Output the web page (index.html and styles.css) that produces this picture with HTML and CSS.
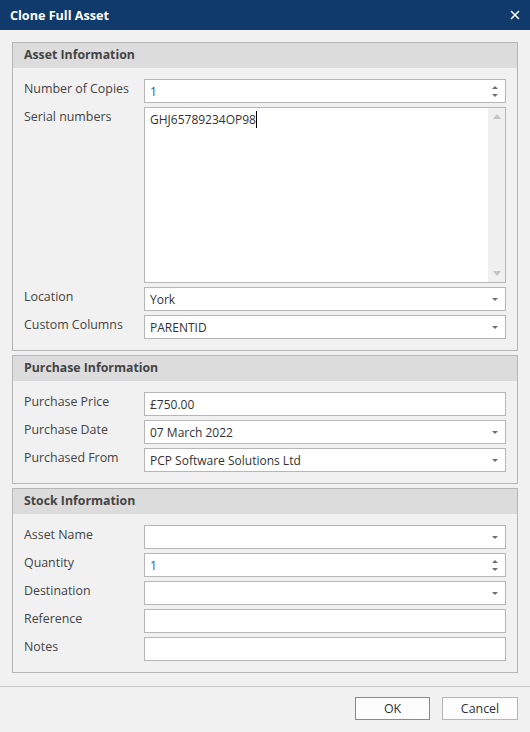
FILE: index.html
```html
<!DOCTYPE html>
<html lang="en">

<head>
  <meta charset="UTF-8">
  <meta name="viewport" content="width=device-width, initial-scale=1.0">
  <title>Clone Full Asset</title>
  <link rel="stylesheet" href="styles.css">
</head>

<body>
  <div class="dialog">
    <div class="titlebar">
      <span class="title">Clone Full Asset</span>
      <button class="close" title="Close">
        <svg width="10" height="10" viewBox="0 0 10 10">
          <path d="M1 1 L9 9 M9 1 L1 9" stroke="#fff" stroke-width="1.6" />
        </svg>
      </button>
    </div>

    <div class="content">
      <!-- Asset -->
      <section class="group">
        <div class="group-header">Asset Information</div>
        <div class="group-body">
          <label>Number of Copies</label>
          <div class="field spin"><span class="value num">1</span><span class="spinner"><i class="up"></i><i class="down"></i></span></div>

          <label>Serial numbers</label>
          <div class="field memo">
            <span class="value">GHJ65789234OP98<span class="caret"></span></span>
            <span class="scrollbar"><i class="up"></i><i class="down"></i></span>
          </div>

          <label>Location</label>
          <div class="field combo"><span class="value">York</span><i class="arrow"></i></div>

          <label>Custom Columns</label>
          <div class="field combo"><span class="value">PARENTID</span><i class="arrow"></i></div>
        </div>
      </section>

      <!-- Purchase -->
      <section class="group">
        <div class="group-header">Purchase Information</div>
        <div class="group-body">
          <label>Purchase Price</label>
          <div class="field"><span class="value">£750.00</span></div>

          <label>Purchase Date</label>
          <div class="field combo"><span class="value">07 March 2022</span><i class="arrow"></i></div>

          <label>Purchased From</label>
          <div class="field combo"><span class="value">PCP Software Solutions Ltd</span><i class="arrow"></i></div>
        </div>
      </section>

      <!-- Stock -->
      <section class="group">
        <div class="group-header">Stock Information</div>
        <div class="group-body">
          <label>Asset Name</label>
          <div class="field combo"><span class="value"></span><i class="arrow"></i></div>

          <label>Quantity</label>
          <div class="field spin"><span class="value num">1</span><span class="spinner"><i class="up"></i><i class="down"></i></span></div>

          <label>Destination</label>
          <div class="field combo"><span class="value"></span><i class="arrow"></i></div>

          <label>Reference</label>
          <div class="field"><span class="value"></span></div>

          <label>Notes</label>
          <div class="field"><span class="value"></span></div>
        </div>
      </section>
    </div>

    <div class="footer">
      <button class="btn default">OK</button>
      <button class="btn cancel">Cancel</button>
    </div>
  </div>
</body>

</html>
```

FILE: styles.css
```css
body {
  margin: 0;
  font-family: "Open Sans", "Noto Sans", Arial, sans-serif;
  font-size: 12px;
  color: #333;
  background-color: #f1f1f1;
}

.dialog {
  width: 530px;
  height: 732px;
  display: flex;
  flex-direction: column;
}

.titlebar {
  height: 30px;
  background-color: #0f3a6b;
  display: flex;
  align-items: center;
  justify-content: space-between;
  padding: 0 10px;
}

.title {
  color: #fff;
  font-weight: bold;
  font-size: 12.6px;
}

.close {
  background: none;
  border: none;
  padding: 0;
  width: 10px;
  height: 10px;
  display: flex;
  cursor: pointer;
}

.content {
  padding: 12px 12px 0;
  display: flex;
  flex-direction: column;
  gap: 4px;
}

.group {
  border: 1px solid #b6b6b6;
}

.group-header {
  height: 25px;
  box-sizing: border-box;
  line-height: 24px;
  background-color: #dcdcdc;
  padding-left: 11px;
  font-weight: bold;
  font-size: 12.3px;
  color: #444;
}

.group-body {
  display: grid;
  grid-template-columns: 120px 1fr;
  row-gap: 4px;
  padding: 11px;
}

.group-body label {
  line-height: 18px;
  padding-top: 1px;
  font-size: 12.4px;
  color: #444;
}

.field {
  position: relative;
  height: 24px;
  box-sizing: border-box;
  border: 1px solid #b6b6b6;
  background-color: #fff;
  display: flex;
  align-items: center;
  padding: 1px 5px 0;
}

.value {
  flex: 1;
  color: #333;
}

.value.num {
  color: #2a5ba8;
}

/* dropdown arrow */
.arrow {
  width: 0;
  height: 0;
  border-left: 3px solid transparent;
  border-right: 3px solid transparent;
  border-top: 3px solid #707070;
  margin-right: 2px;
}

.spinner {
  display: flex;
  flex-direction: column;
  gap: 5px;
  margin-right: 2px;
}

.spinner i {
  width: 0;
  height: 0;
  border-left: 3px solid transparent;
  border-right: 3px solid transparent;
}

.spinner .up {
  border-bottom: 3px solid #707070;
}

.spinner .down {
  border-top: 3px solid #707070;
}

.field.memo {
  height: 176px;
  align-items: flex-start;
  padding: 0 0 0 5px;
}

.memo .value {
  padding-top: 3px;
  line-height: 18px;
}

.caret {
  display: inline-block;
  width: 1px;
  height: 17px;
  background-color: #000;
  vertical-align: -4px;
}

.scrollbar {
  width: 17px;
  align-self: stretch;
  background-color: #f0f0f0;
  display: flex;
  flex-direction: column;
  justify-content: space-between;
  align-items: center;
  padding: 6px 0;
}

.scrollbar i {
  width: 0;
  height: 0;
  border-left: 4px solid transparent;
  border-right: 4px solid transparent;
}

.scrollbar .up {
  border-bottom: 5px solid #c4c4c4;
}

.scrollbar .down {
  border-top: 5px solid #c4c4c4;
}

.footer {
  margin-top: 13px;
  border-top: 1px solid #c8c8c8;
  padding: 10px 12px 0 0;
  display: flex;
  justify-content: flex-end;
  gap: 12px;
}

.btn {
  width: 75px;
  height: 23px;
  background-color: #fdfdfd;
  border: 1px solid #b6b6b6;
  font-family: inherit;
  font-size: 12.4px;
  color: #333;
  padding: 0;
  cursor: pointer;
}

.btn.cancel {
  width: 76px;
}

.btn.default {
  border-color: #8a8a8a;
}
```
